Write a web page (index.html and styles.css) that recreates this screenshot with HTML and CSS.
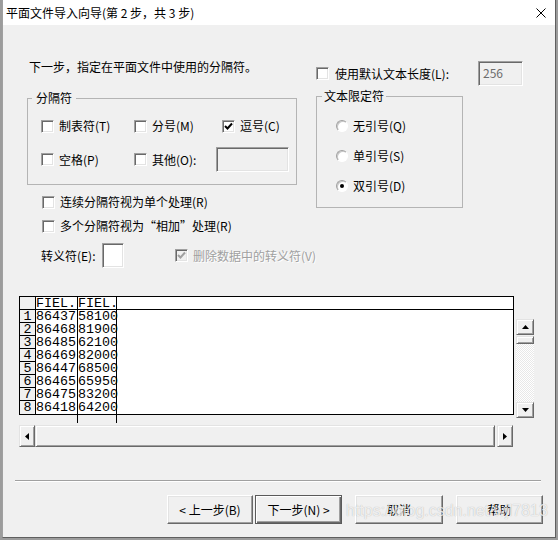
FILE: index.html
```html
<!DOCTYPE html>
<html lang="zh-CN">
<head>
  <meta charset="UTF-8">
  <title>平面文件导入向导</title>
  <link rel="stylesheet" href="styles.css">
</head>
<body>
  <div class="window">
    <div class="titlebar">
      <span class="title">平面文件导入向导(第 2 步，共 3 步)</span>
      <span class="close">
        <svg width="10" height="10" viewBox="0 0 10 10"><path d="M0.5 0.5 L9.5 9.5 M9.5 0.5 L0.5 9.5" stroke="#000" stroke-width="1" fill="none"/></svg>
      </span>
    </div>

    <div class="top">
      <div class="col-left">
        <p class="intro">下一步，指定在平面文件中使用的分隔符。</p>

        <div class="group sep-group">
          <span class="group-title">分隔符</span>
          <div class="sep-row">
            <label class="check w93"><span class="box"></span>制表符(T)</label>
            <label class="check w88"><span class="box"></span>分号(M)</label>
            <label class="check"><span class="box"><svg width="11" height="11" viewBox="0 0 11 11"><path d="M2 5 L4.5 7.5 L9 2.5" stroke="#000" stroke-width="2" fill="none"/></svg></span>逗号(C)</label>
          </div>
          <div class="sep-row">
            <label class="check w93"><span class="box"></span>空格(P)</label>
            <label class="check w82"><span class="box"></span>其他(O):</label>
            <span class="field other-field"></span>
          </div>
        </div>

        <div class="opts">
          <label class="check"><span class="box"></span>连续分隔符视为单个处理(R)</label>
          <label class="check"><span class="box"></span>多个分隔符视为“相加”处理(R)</label>
        </div>

        <div class="escape">
          <span class="escape-label">转义符(E):</span>
          <span class="field esc-field"></span>
          <label class="check disabled"><span class="box"><svg width="11" height="11" viewBox="0 0 11 11"><path d="M2 5 L4.5 7.5 L9 2.5" stroke="#a0a0a0" stroke-width="2" fill="none"/></svg></span>删除数据中的转义符(V)</label>
        </div>
      </div>

      <div class="col-right">
        <div class="len-row">
          <label class="check wide-gap"><span class="box"></span>使用默认文本长度(L):</label>
          <span class="field len-field">256</span>
        </div>

        <div class="group quote-group">
          <span class="group-title">文本限定符</span>
          <label class="radio-row"><span class="radio"></span>无引号(Q)</label>
          <label class="radio-row"><span class="radio"></span>单引号(S)</label>
          <label class="radio-row"><span class="radio on"></span>双引号(D)</label>
        </div>
      </div>
    </div>

    <div class="table-area">
      <div class="sheet-wrap">
        <div class="sheet">
          <div class="corner"></div><div class="hd">FIEL.</div><div class="hd">FIEL.</div><div class="hd-rest"></div>
          <div class="rh">1</div><div class="cell">86437</div><div class="cell">58100</div><div></div>
          <div class="rh">2</div><div class="cell">86468</div><div class="cell">81900</div><div></div>
          <div class="rh">3</div><div class="cell">86485</div><div class="cell">62100</div><div></div>
          <div class="rh">4</div><div class="cell">86469</div><div class="cell">82000</div><div></div>
          <div class="rh">5</div><div class="cell">86447</div><div class="cell">68500</div><div></div>
          <div class="rh">6</div><div class="cell">86465</div><div class="cell">65950</div><div></div>
          <div class="rh">7</div><div class="cell">86475</div><div class="cell">83200</div><div></div>
          <div class="rh last">8</div><div class="cell">86418</div><div class="cell">64200</div><div></div>
        </div>
        <div class="sheet-tail"></div>
      </div>

      <div class="vscroll">
        <span class="sbtn vbtn"><svg width="7" height="4" viewBox="0 0 7 4"><path d="M3.5 0 L7 4 L0 4Z"/></svg></span>
        <span class="sbtn vthumb"></span>
        <span class="track"></span>
        <span class="sbtn vbtn"><svg width="7" height="4" viewBox="0 0 7 4"><path d="M0 0 L7 0 L3.5 4Z"/></svg></span>
      </div>
    </div>

    <div class="hscroll">
      <span class="sbtn hbtn"><svg width="4" height="7" viewBox="0 0 4 7"><path d="M0 3.5 L4 0 L4 7Z"/></svg></span>
      <span class="sbtn hthumb"></span>
      <span class="sbtn hbtn right"><svg width="4" height="7" viewBox="0 0 4 7"><path d="M0 0 L4 3.5 L0 7Z"/></svg></span>
    </div>

    <div class="separator"></div>

    <div class="buttons">
      <button class="btn back">&lt; 上一步(B)</button>
      <button class="btn next default">下一步(N) &gt;</button>
      <button class="btn cancel">取消</button>
      <button class="btn help">帮助</button>
    </div>

    <span class="watermark">https://blog.csdn.net/wjl7813</span>
  </div>
</body>
</html>
```

FILE: styles.css
```css
* {
  box-sizing: border-box;
}

body {
  margin: 0;
  background: #9c9c9c;
  font-family: "Noto Sans CJK SC", sans-serif;
  font-size: 12px;
  color: #000;
}

.window {
  position: relative;
  width: 554px;
  height: 538px;
  margin-left: 2px;
  background: #f0f0f0;
  border-left: 1px solid #a0a0a0;
  border-right: 1px solid #5f5f5f;
  border-bottom: 1px solid #5f5f5f;
}

/* 标题栏 */
.titlebar {
  display: flex;
  align-items: center;
  height: 25px;
  background: #fff;
  padding-left: 3px;
}

.title {
  line-height: 16px;
}

.close {
  margin-left: auto;
  width: 28px;
  display: flex;
  justify-content: center;
}

/* 上半部分：分隔符 + 文本限定符 */
.top {
  display: flex;
  padding-left: 24px;
}

.col-left {
  width: 289px;
}

.col-right {
  width: 207px;
}

.intro {
  margin: 34px 0 0 2px;
  line-height: 16px;
}

.group {
  position: relative;
  border: 1px solid #b4b4b4;
}

.group-title {
  position: absolute;
  top: -9px;
  left: 4px;
  padding: 0 4px;
  line-height: 16px;
  background: #f0f0f0;
}

.quote-group .group-title {
  left: 5px;
  padding: 0 2px;
}

.sep-group {
  width: 270px;
  height: 87px;
  margin-top: 23px;
  padding: 17px 0 0 13px;
}

.sep-row {
  display: flex;
  align-items: center;
  height: 20px;
}

.sep-row + .sep-row {
  margin-top: 11px;
  height: 25px;
}

.w93 { width: 93px; }
.w88 { width: 88px; }
.w82 { width: 82px; }

.check {
  display: flex;
  align-items: center;
  gap: 5px;
  line-height: 16px;
  white-space: nowrap;
}

.check.wide-gap {
  gap: 6px;
}

.box {
  flex: none;
  width: 13px;
  height: 13px;
  background: #fff;
  border: 1px solid;
  border-color: #a0a0a0 #fff #fff #a0a0a0;
  box-shadow: inset 1px 1px #696969, inset -1px -1px #e3e3e3;
  display: flex;
}

.field {
  display: block;
  height: 25px;
  background: #f0f0f0;
  border: 1px solid;
  border-color: #a0a0a0 #fff #fff #a0a0a0;
  box-shadow: inset 1px 1px #696969, inset -1px -1px #e3e3e3;
}

.other-field {
  width: 73px;
}

.opts {
  margin: 9px 0 0 15px;
}

.opts .check + .check {
  margin-top: 8px;
}

.escape {
  display: flex;
  align-items: center;
  height: 25px;
  margin: 9px 0 0 14px;
}

.escape-label {
  width: 70px;
  white-space: nowrap;
}

.esc-field {
  width: 25px;
  background: #fff;
}

.check.disabled {
  margin-left: 51px;
  color: #a0a0a0;
  text-shadow: 1px 1px #fff;
}

.check.disabled .box {
  background: #f0f0f0;
}

.len-row {
  display: flex;
  align-items: center;
  height: 25px;
  margin-top: 36px;
}

.len-field {
  margin-left: auto;
  width: 45px;
  padding-left: 4px;
  line-height: 22px;
  color: #6d6d6d;
}

.quote-group {
  width: 147px;
  height: 112px;
  margin-top: 10px;
  padding: 20px 0 0 19px;
}

.radio-row {
  display: flex;
  align-items: center;
  gap: 5px;
  height: 18px;
  line-height: 16px;
}

.radio-row + .radio-row {
  margin-top: 12px;
}

.radio {
  flex: none;
  width: 12px;
  height: 12px;
  border-radius: 50%;
  background: #fff;
  border: 1px solid;
  border-color: #a0a0a0 #fff #fff #a0a0a0;
  box-shadow: inset 1px 1px #c8c8c8;
  display: flex;
  align-items: center;
  justify-content: center;
}

.radio.on::after {
  content: "";
  width: 4px;
  height: 4px;
  border-radius: 50%;
  background: #000;
}

/* 预览表格 */
.table-area {
  display: flex;
  align-items: flex-start;
  margin: 28px 0 0 16px;
}

.sheet-wrap {
  width: 495px;
}

.sheet {
  display: grid;
  grid-template-columns: 16px 42px 39px 1fr;
  grid-auto-rows: 13px;
  border: 1px solid #000;
  background: #fff;
  font-family: "Liberation Mono", monospace;
  font-size: 13.33px;
  line-height: 13px;
}

.corner {
  background: #f0f0f0;
  border-right: 1px solid #000;
  border-bottom: 1px solid #000;
}

.hd {
  border-right: 1px solid #000;
  border-bottom: 1px solid #000;
  white-space: nowrap;
  overflow: hidden;
}

.hd-rest {
  border-bottom: 1px solid #000;
}

.rh {
  background: #f0f0f0;
  border-right: 1px solid #000;
  border-bottom: 1px solid #000;
  text-align: center;
}

.rh.last {
  border-bottom: none;
}

.cell {
  border-right: 1px solid #000;
  white-space: nowrap;
}

.sheet-tail {
  height: 8px;
  width: 40px;
  margin-left: 58px;
  border-left: 1px solid #000;
  border-right: 1px solid #000;
}

/* 滚动条 */
.sbtn {
  display: flex;
  align-items: center;
  justify-content: center;
  background: #f0f0f0;
  border: 1px solid;
  border-color: #e3e3e3 #696969 #696969 #e3e3e3;
  box-shadow: inset 1px 1px #fff, inset -1px -1px #a0a0a0;
}

.vscroll {
  display: flex;
  flex-direction: column;
  width: 18px;
  height: 99px;
  margin: 23px 0 0 2px;
}

.vbtn {
  height: 16px;
}

.vthumb {
  height: 8px;
  margin-top: 1px;
}

.track {
  flex: 1;
  background: repeating-conic-gradient(#fff 0 25%, #e8e8e8 0 50%) 0 0 / 2px 2px;
}

.hscroll {
  display: flex;
  width: 494px;
  height: 22px;
  margin: 2px 0 0 16px;
}

.hbtn {
  width: 16px;
}

.hbtn.right {
  margin-left: 2px;
}

.hthumb {
  flex: 1;
}

.separator {
  width: 526px;
  height: 2px;
  margin: 33px 0 0 12px;
  border-top: 1px solid #a0a0a0;
  border-bottom: 1px solid #fff;
}

/* 底部按钮 */
.buttons {
  display: flex;
  margin: 13px 0 0 164px;
}

.btn {
  height: 29px;
  padding: 0;
  font-family: inherit;
  font-size: 12px;
  color: #000;
  background: #f0f0f0;
  border: 1px solid;
  border-color: #fff #696969 #696969 #fff;
  box-shadow: inset -1px -1px #a0a0a0, inset 1px 1px #e3e3e3;
}

.btn.default {
  border: 1px solid #5a5a5a;
  box-shadow: inset 1px 1px #fff, inset -1px -1px #696969, inset -2px -2px #a0a0a0;
}

.back { width: 86px; }
.next { width: 87px; margin-left: 2px; }
.cancel { width: 88px; margin-left: 13px; }
.help { width: 87px; margin-left: 13px; }

.watermark {
  position: absolute;
  left: 343px;
  top: 502px;
  font-family: "Liberation Sans", sans-serif;
  font-size: 16px;
  color: rgba(255, 255, 255, 0.8);
  text-shadow: 0 0 1px rgba(0, 0, 0, 0.3);
  white-space: nowrap;
}
```
